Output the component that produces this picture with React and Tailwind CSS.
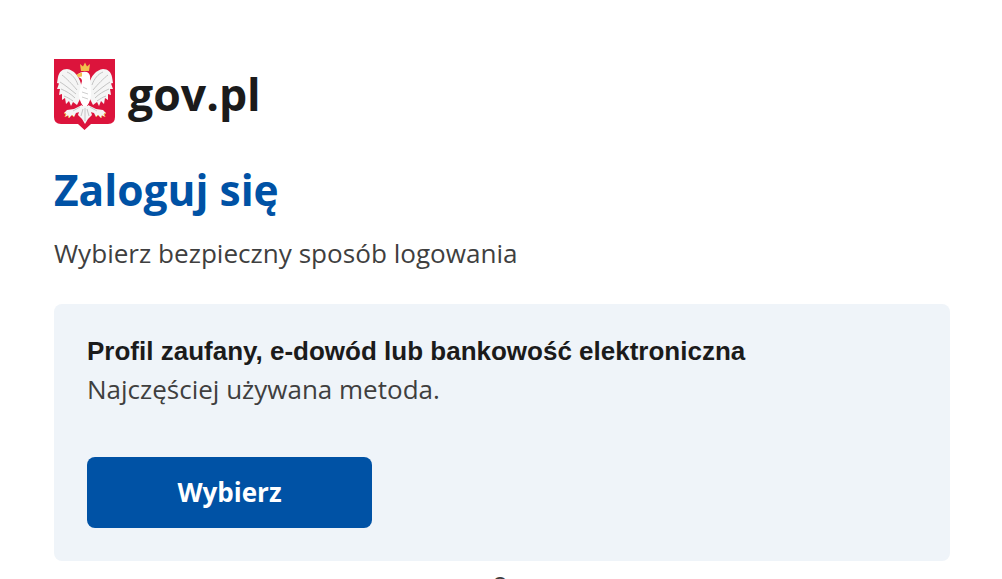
const Wing = () => (
    <g>
        <path d="M27 25C25 17 20 11 13 10C8 10 5 13 4 18L3 24L5 24.5L3 30L6 30L5 36L8 35L8 41L11 39L12 45L15 42L17 47L19 43L23 46L27 38Z" fill="#f5f5f5" />
        <path d="M13 13C18 15 22 20 24 26M8 16C12 19 18 25 23 31M6 23C11 26 17 31 22 35M7 30C12 32 17 35 21 39M10 37C13 38 16 40 19 42" stroke="#c4c4c4" strokeWidth="1" fill="none" />
    </g>
)

const Leg = () => (
    <g>
        <path d="M28 46L20 50L13 51L10 54L12 55L11 58L14 56.5L15 59L18 56L20 58L22 54L29 52Z" fill="#f5f5f5" />
        <path d="M10 54L12 55L11 58M14 56.5L15 59M18 56L20 58" stroke="#f0b94a" strokeWidth="1" fill="none" />
        <path d="M26 48L19 52" stroke="#c4c4c4" strokeWidth="0.8" fill="none" />
    </g>
)

const Eagle = () => (
    <svg viewBox="0 0 61 71" className="w-[61px] h-[71px] shrink-0">
        {/* shield */}
        <path d="M0 0H61V58Q61 65 54 65H37L30.5 71L24 65H7Q0 65 0 58Z" fill="#dc143c" />
        <Wing />
        <g transform="translate(62 0) scale(-1 1)">
            <Wing />
            <Leg />
        </g>
        <Leg />
        {/* crown */}
        <path d="M27 12L26 5L29 7.5L31 3.5L33 7.5L36 5L35 12Z" fill="#f2c14e" />
        {/* head and body */}
        <path d="M24 15Q28 12 33 13Q37 15 36 21L37 34Q37 42 33 47H29Q25 42 25 34L28 22Q28 19 24 18Z" fill="#ffffff" />
        <path d="M22.5 15.5L28 13.5L28 17.5L24 18Z" fill="#f2c14e" />
        <path d="M29 28L33 30M28 33L34 35M28 38L34 40" stroke="#cfcfcf" strokeWidth="1" fill="none" />
        {/* tail */}
        <path d="M27 47H35L38 56L34 60L31 65L28 60L24 56Z" fill="#f5f5f5" />
        <path d="M31 49V62M29 50L27 57M33 50L35 57" stroke="#c4c4c4" strokeWidth="1" fill="none" />
    </svg>
)

export default function App() {
    return (
        <div className="h-screen overflow-hidden bg-white pl-[54px] pr-[52px] pt-[59px] font-['Open_Sans',sans-serif]">
            {/* Logo */}
            <div className="flex items-center gap-[13px] h-[71px]">
                <Eagle />
                <span className="text-[44.6px] leading-none font-bold text-[#1b1b1b]">gov.pl</span>
            </div>

            <h1 className="mt-[29px] text-[42.5px] leading-[62px] font-bold text-[#0052a5]">Zaloguj się</h1>
            <p className="mt-[14px] text-[26.1px] leading-[36px] text-[#3f3f3f]">Wybierz bezpieczny sposób logowania</p>

            {/* Card */}
            <div className="mt-[33px] h-[257px] rounded-lg bg-[#eff4f9] pl-[33px] pt-[30px]">
                <h2 className="font-['Liberation_Sans',sans-serif] text-[26px] leading-[34px] font-bold text-[#1b1b1b]">
                    Profil zaufany, e-dowód lub bankowość elektroniczna
                </h2>
                <p className="mt-[2px] text-[26px] leading-[38px] text-[#3f3f3f]">Najczęściej używana metoda.</p>
                <button className="mt-[49px] flex h-[71px] w-[285px] items-center justify-center rounded-lg bg-[#0052a5] text-[26px] font-bold text-white">
                    Wybierz
                </button>
            </div>

            <div className="mt-[3px] pr-[4px] text-center text-[26px] leading-[34px] text-[#3f3f3f]">o</div>
        </div>
    )
}
